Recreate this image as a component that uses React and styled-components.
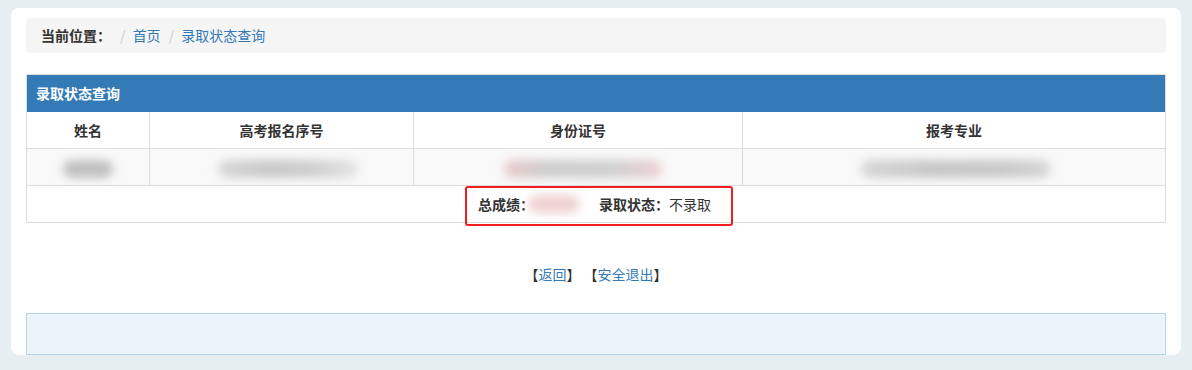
import React from "react";
import styled, { createGlobalStyle } from "styled-components";

const GlobalStyle = createGlobalStyle`
  html, body { margin: 0; padding: 0; }
  body {
    background: #e6eef1;
    font-family: "Noto Sans CJK SC", "Noto Sans", "Liberation Sans", sans-serif;
    font-size: 14px;
    color: #333;
  }
`;

const Page = styled.div`
  padding: 8px 11px 15px;
`;

const Card = styled.div`
  background: #fff;
  border-radius: 8px;
  padding: 10px 15px 0;
`;

const Breadcrumb = styled.ol`
  list-style: none;
  margin: 0 0 21px;
  padding: 8px 15px;
  background: #f5f5f5;
  border-radius: 4px;
  line-height: 19px;
  display: flex;
  align-items: center;
`;

const Crumb = styled.li`
  display: inline-block;
  font-weight: ${(p) => (p.$label ? 700 : 400)};
  color: ${(p) => (p.$label ? "#333" : "#337ab7")};
  &:not(:first-child)::before {
    content: "/\\00a0";
    padding: 0 4px 0 ${(p) => (p.$first ? 9 : 8)}px;
    color: #ccc;
    font-weight: 400;
  }
`;

const Panel = styled.div`
  border: 1px solid #ddd;
`;

const PanelHeading = styled.div`
  background: #337ab7;
  border-bottom: 1px solid #337ab7;
  height: 36px;
  line-height: 36px;
  padding: 0 9px;
  color: #fff;
  font-weight: 700;
`;

const Table = styled.table`
  width: 100%;
  border-collapse: separate;
  border-spacing: 0;
  table-layout: fixed;
`;

const Row = styled.tr`
  background: ${(p) => (p.$striped ? "#f9f9f9" : "#fff")};
`;

const Cell = styled.td`
  box-sizing: border-box;
  height: ${(p) => (p.$last ? 36 : 37)}px;
  padding: 0 8px;
  text-align: center;
  vertical-align: middle;
  line-height: 20px;
  font-weight: ${(p) => (p.$head ? 700 : 400)};
  border-bottom: ${(p) => (p.$last ? "none" : "1px solid #ddd")};
  border-right: ${(p) => (p.$end ? "none" : "1px solid #ddd")};
`;

const Blur = styled.span`
  display: inline-block;
  vertical-align: middle;
  width: ${(p) => p.$w}px;
  height: 18px;
  margin-left: ${(p) => p.$shift || 0}px;
  border-radius: 12px;
  background: ${(p) => p.$c};
  filter: blur(5px);
`;

const Highlight = styled.span`
  position: relative;
  display: inline-flex;
  align-items: center;
  margin-left: -3px;
  &::after {
    content: "";
    position: absolute;
    left: -13px;
    right: -22px;
    top: -8px;
    bottom: -12px;
    border: 2px solid #f01e1e;
    border-radius: 3px;
  }
`;

const Label = styled.b`
  font-weight: 700;
`;

const ScoreSlot = styled.span`
  display: inline-flex;
  align-items: center;
  width: 65px;
`;

const Actions = styled.div`
  margin: 41px 0 29px;
  text-align: center;
  line-height: 20px;
`;

const Link = styled.a`
  color: #337ab7;
  text-decoration: none;
`;

const InfoBox = styled.div`
  box-sizing: border-box;
  height: 42px;
  background: #ebf4fb;
  border: 1px solid #b6d5e9;
`;

const cols = [123, 264, 329, 422];
const heads = ["姓名", "高考报名序号", "身份证号", "报考专业"];

export default function App() {
  return (
    <>
      <GlobalStyle />
      <Page>
        <Card>
          <Breadcrumb>
            <Crumb $label>当前位置：</Crumb>
            <Crumb $first>首页</Crumb>
            <Crumb>录取状态查询</Crumb>
          </Breadcrumb>
          <Panel>
            <PanelHeading>录取状态查询</PanelHeading>
            <Table>
              <colgroup>
                {cols.map((w, i) => (
                  <col key={i} style={{ width: w }} />
                ))}
              </colgroup>
              <tbody>
                <Row>
                  {heads.map((h, i) => (
                    <Cell as="th" key={h} $head $end={i === 3}>
                      {h}
                    </Cell>
                  ))}
                </Row>
                <Row $striped>
                  <Cell>
                    <Blur $w={50} $c="#c0c0c0" />
                  </Cell>
                  <Cell>
                    <Blur $w={140} $c="linear-gradient(90deg,#d8d8d8,#c8c8c8 35%,#cdcdcd 65%,#e4e4e4)" $shift={12} />
                  </Cell>
                  <Cell>
                    <Blur $w={158} $c="linear-gradient(90deg,#eacaca,#cccccc 30%,#d0d0d0 70%,#eed0d0)" $shift={10} />
                  </Cell>
                  <Cell $end>
                    <Blur $w={190} $c="linear-gradient(90deg,#d6d6d6,#c6c6c6 40%,#cacaca 80%,#d8d8d8)" $shift={4} />
                  </Cell>
                </Row>
                <Row>
                  <Cell colSpan={4} $last $end>
                    <Highlight>
                      <Label>总成绩：</Label>
                      <ScoreSlot>
                        <Blur $w={52} $c="#f0d2d2" $shift={-6} />
                      </ScoreSlot>
                      <Label>录取状态：</Label>
                      <span>不录取</span>
                    </Highlight>
                  </Cell>
                </Row>
              </tbody>
            </Table>
          </Panel>
          <Actions>
            【<Link href="#">返回</Link>】 【<Link href="#">安全退出</Link>】
          </Actions>
          <InfoBox />
        </Card>
      </Page>
    </>
  );
}
